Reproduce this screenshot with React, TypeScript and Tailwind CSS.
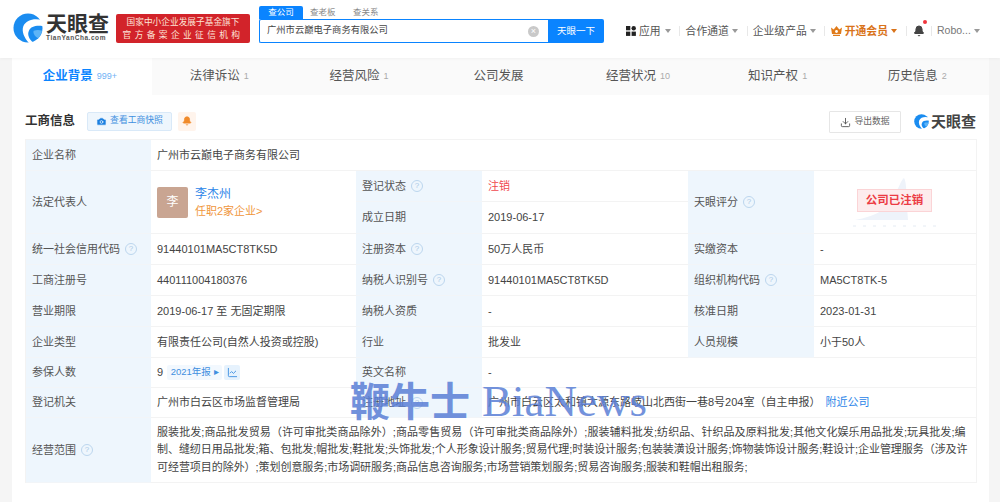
import React from 'react';
import { Download, Camera, Bell, ChartLine } from 'lucide-react';

const FONT = '"Liberation Sans", "Noto Sans CJK SC", sans-serif';

const Logo = ({ size }: { size: number }) => (
  <svg width={size} height={size} viewBox="0 0 32 32">
    <circle cx="16" cy="16" r="15.5" fill="#1a8cf0" />
    <path d="M32 8C24 5 14 7 11 14c-2 6 1 12 6 18h5c-5-4-7-9-5-13 2-5 8-6 15-5z" fill="#fff" />
    <path d="M22 19c3-1 6-1 9 0-1 3-2 6-4 8-3-1-6-5-5-8z" fill="#5db4f7" />
  </svg>
);

const Caret = ({ color = 'border-t-[#999]' }: { color?: string }) => (
  <span className={`inline-block w-0 h-0 border-x-[3px] border-x-transparent border-t-[4px] ${color}`} />
);

const Sep = () => <span className="w-px h-[10px] bg-[#e8e8e8]" />;

const Hint = () => (
  <span className="inline-flex items-center justify-center w-[12px] h-[12px] rounded-full border border-[#bcd6ee] text-[#a9c8e6] text-[8px] leading-none">?</span>
);

const Label = ({ children, hint, className = '' }: { children: React.ReactNode; hint?: boolean; className?: string }) => (
  <div className={`bg-[#eef6fd] border-b border-[#f2f5f8] pl-[6px] flex items-center gap-[5px] text-[#555] ${className}`}>
    {children}
    {hint && <Hint />}
  </div>
);

const Value = ({ children, className = '' }: { children: React.ReactNode; className?: string }) => (
  <div className={`border-b border-[#f3f3f3] pl-[6px] flex items-center text-[#444] ${className}`}>{children}</div>
);

const tabs = [
  { name: '企业背景', count: '999+', active: true },
  { name: '法律诉讼', count: '1' },
  { name: '经营风险', count: '1' },
  { name: '公司发展', count: '' },
  { name: '经营状况', count: '10' },
  { name: '知识产权', count: '1' },
  { name: '历史信息', count: '2' },
];

export default function App() {
  return (
    <div className="relative w-[1000px] h-[502px] overflow-hidden bg-[#f5f5f5]" style={{ fontFamily: FONT }}>
      {/* top bar */}
      <header className="h-[58px] bg-white flex items-start shadow-[0_1px_3px_rgba(0,0,0,0.04)] relative">
        <div className="ml-[13px] mt-[13px] flex">
          <Logo size={30} />
          <div className="ml-[3px] w-[63px]">
            <div className="text-[21px] leading-[21px] text-[#333] font-bold tracking-normal">天眼查</div>
            <div className="text-[6.5px] leading-[8px] text-[#555] font-bold tracking-[0.55px]">TianYanCha.com</div>
          </div>
        </div>
        <div className="ml-[7px] mt-[14px] w-[134px] h-[29px] bg-[#d2232a] rounded-[2px] text-[#fde4d8] flex flex-col items-center justify-center">
          <div className="text-[8.7px] leading-[13px]">国家中小企业发展子基金旗下</div>
          <div className="text-[8.7px] leading-[13px] tracking-[3.4px]">官方备案企业征信机构</div>
        </div>
        <div className="ml-[9px] mt-[6px] w-[345px]">
          <div className="flex h-[13px] text-[8.5px] leading-[13px] text-[#888]">
            <div className="w-[44px] bg-[#0a84ff] text-white text-center rounded-t-[2px]">查公司</div>
            <div className="ml-[7px] w-[28px]">查老板</div>
            <div className="ml-[15px] w-[28px]">查关系</div>
          </div>
          <div className="flex h-[24px] w-[345px]">
            <div className="flex-1 border border-[#0a84ff] border-r-0 rounded-l-[2px] flex items-center pl-[7px] pr-[9px] text-[9.3px] text-[#444]">
              <span className="flex-1">广州市云巅电子商务有限公司</span>
              <span className="w-[11px] h-[11px] rounded-full bg-[#c9c9c9] text-white text-[9px] leading-[11px] text-center">×</span>
            </div>
            <div className="w-[56px] bg-[#0a84ff] rounded-r-[2px] text-white text-[9.5px] flex items-center justify-center">天眼一下</div>
          </div>
        </div>
        <nav className="ml-[22px] mt-[24px] flex items-center h-[14px] text-[10.8px] text-[#555]">
          <svg width="10" height="10" viewBox="0 0 10 10" className="mr-[3px]">
            <rect x="0" y="0" width="4.3" height="4.3" fill="#222" />
            <circle cx="7.7" cy="2.2" r="2.2" fill="#222" />
            <rect x="0" y="5.6" width="4.3" height="4.3" fill="#222" />
            <rect x="5.6" y="5.6" width="4.3" height="4.3" fill="#222" />
          </svg>
          <span>应用</span>
          <span className="ml-[4px] mr-[8px] flex"><Caret /></span>
          <Sep />
          <span className="ml-[6px]">合作通道</span>
          <span className="ml-[3px] mr-[9px] flex"><Caret /></span>
          <Sep />
          <span className="ml-[5px]">企业级产品</span>
          <span className="ml-[3px] mr-[8px] flex"><Caret /></span>
          <Sep />
          <svg width="11" height="10" viewBox="0 0 11 10" className="ml-[6px] mr-[3px]">
            <path d="M0 1.5 2.7 3.5 5.5 0 8.3 3.5 11 1.5 10 8H1z M2 8.8h7V10H2z" fill="#e07b1a" />
            <circle cx="5.5" cy="5.5" r="1.4" fill="#fff" />
          </svg>
          <span className="font-bold text-[#d9731a]">开通会员</span>
          <span className="ml-[3px] mr-[9px] flex"><Caret color="border-t-[#d9731a]" /></span>
          <Sep />
          <span className="relative ml-[6px] mr-[6px] flex">
            <Bell size={12} className="text-[#444]" fill="#444" />
            <span className="absolute -top-[5px] left-[10px] w-[4px] h-[4px] rounded-full bg-[#f0343c]" />
          </span>
          <Sep />
          <span className="ml-[5px] text-[10.5px] text-[#777]">Robo...</span>
          <span className="ml-[3px] flex"><Caret /></span>
        </nav>
      </header>

      <main className="mx-[12px] w-[977px] h-[444px] bg-white">
        {/* tabs */}
        <div className="grid grid-cols-7 h-[37px] bg-[#fafafa]">
          {tabs.map(t => (
            <div key={t.name} className={`flex items-center justify-center gap-[4px] pr-[4px] ${t.active ? 'bg-white' : ''}`}>
              <span className={`text-[12.5px] ${t.active ? 'text-[#0a84ff] font-bold' : 'text-[#555]'}`}>{t.name}</span>
              {t.count && <span className={`text-[9px] ${t.active ? 'text-[#6fb2f5]' : 'text-[#aaa]'}`}>{t.count}</span>}
            </div>
          ))}
        </div>

        {/* section title */}
        <div className="flex items-center h-[44px] pt-[8px] pl-[13px] pr-[12px]">
          <span className="w-[50px] text-[12.5px] font-bold text-[#333]">工商信息</span>
          <button className="ml-[12px] h-[19px] w-[85px] rounded-[2px] bg-[#eef6fd] border border-[#d9e9f8] flex items-center justify-center gap-[3px] text-[8.8px] text-[#3f8fe0]">
            <Camera size={11} fill="#1a7fe0" stroke="#fff" strokeWidth={1.5} />
            查看工商快照
          </button>
          <span className="ml-[6px] w-[18px] h-[19px] rounded-[2px] bg-[#fff4ec] flex items-center justify-center">
            <Bell size={10} className="text-[#f08a2a]" fill="#f08a2a" />
          </span>
          <button className="ml-auto mt-[2px] h-[22px] w-[72px] border border-[#e6e6e6] rounded-[1px] flex items-center justify-center gap-[3px] text-[8.8px] text-[#666]">
            <Download size={11} className="text-[#555]" />
            导出数据
          </button>
          <span className="ml-[13px] flex items-center w-[63px]">
            <Logo size={15} />
            <span className="ml-[2px] text-[15px] leading-none font-bold text-[#444] whitespace-nowrap">天眼查</span>
          </span>
        </div>

        {/* info table */}
        <div className="ml-[13px] w-[952px] border border-[#f3f3f3] border-b-0 grid grid-cols-[125px_205px_126px_206px_126px_1fr] grid-rows-[31px_31px_32px_31px_31px_31px_31px_30px_30px_65px] text-[11px]">
          <Label>企业名称</Label>
          <Value className="col-span-5">广州市云巅电子商务有限公司</Value>

          <Label className="row-span-2">法定代表人</Label>
          <Value className="row-span-2">
            <span className="w-[31px] h-[31px] rounded-[2px] bg-[#c9a592] text-white text-[12px] flex items-center justify-center">李</span>
            <span className="ml-[7px] mt-[2px] flex flex-col">
              <span className="text-[#2a84e8] text-[12px] leading-[17px]">李杰州</span>
              <span className="text-[#f0963c] text-[11px] leading-[17px]">任职2家企业&gt;</span>
            </span>
          </Value>
          <Label hint>登记状态</Label>
          <Value><span className="text-[#f0484e]">注销</span></Value>
          <Label className="row-span-2" hint>天眼评分</Label>
          <Value className="row-span-2 relative pl-[43px]">
            <svg width="92" height="52" viewBox="0 0 92 52" className="absolute left-[37px] top-[5px]">
              <path d="M4 44C24 40 38 34 44 18 48 12 50 4 53 2 56 6 55 20 57 44z" fill="#eef3fa" />
              <path d="M2 50h88" stroke="#e4ebf3" strokeWidth="1" strokeDasharray="3 7" />
            </svg>
            <span className="relative -mt-[3px] w-[75px] h-[23px] bg-[#fdeced] border border-[#fbd4d6] text-[#ec3b44] font-bold text-[11.5px] flex items-center justify-center">公司已注销</span>
          </Value>
          <Label>成立日期</Label>
          <Value>2019-06-17</Value>

          <Label hint>统一社会信用代码</Label>
          <Value>91440101MA5CT8TK5D</Value>
          <Label hint>注册资本</Label>
          <Value>50万人民币</Value>
          <Label>实缴资本</Label>
          <Value>-</Value>

          <Label>工商注册号</Label>
          <Value>440111004180376</Value>
          <Label hint>纳税人识别号</Label>
          <Value>91440101MA5CT8TK5D</Value>
          <Label hint>组织机构代码</Label>
          <Value>MA5CT8TK-5</Value>

          <Label>营业期限</Label>
          <Value>2019-06-17 至 无固定期限</Value>
          <Label>纳税人资质</Label>
          <Value>-</Value>
          <Label>核准日期</Label>
          <Value>2023-01-31</Value>

          <Label>企业类型</Label>
          <Value>有限责任公司(自然人投资或控股)</Value>
          <Label>行业</Label>
          <Value>批发业</Value>
          <Label>人员规模</Label>
          <Value>小于50人</Value>

          <Label>参保人数</Label>
          <Value>
            9
            <span className="ml-[4px] h-[15px] w-[55px] bg-[#f2f8fe] rounded-[2px] text-[#3f8fe0] text-[9.5px] flex items-center justify-center">2021年报 ▸</span>
            <span className="ml-[2px] h-[15px] w-[16px] bg-[#e6f2fd] rounded-[2px] flex items-center justify-center">
              <ChartLine size={11} className="text-[#3f8fe0]" />
            </span>
          </Value>
          <Label>英文名称</Label>
          <Value className="col-span-3">-</Value>

          <Label>登记机关</Label>
          <Value>广州市白云区市场监督管理局</Value>
          <Label hint>注册地址</Label>
          <Value className="col-span-3">
            广州市白云区太和镇大源东路岐山北西街一巷8号204室（自主申报）
            <span className="ml-[5px] text-[#2a84e8]">附近公司</span>
          </Value>

          <Label hint>经营范围</Label>
          <div className="col-span-5 border-b border-[#f3f3f3] pl-[6px] flex items-center text-[#444] text-[11px] leading-[17.5px]">
            <p className="whitespace-nowrap">
              <span className="block tracking-[0.08px]">服装批发;商品批发贸易（许可审批类商品除外）;商品零售贸易（许可审批类商品除外）;服装辅料批发;纺织品、针织品及原料批发;其他文化娱乐用品批发;玩具批发;编</span>
              <span className="block tracking-[-0.05px]">制、缝纫日用品批发;箱、包批发;帽批发;鞋批发;头饰批发;个人形象设计服务;贸易代理;时装设计服务;包装装潢设计服务;饰物装饰设计服务;鞋设计;企业管理服务（涉及许</span>
              <span className="block tracking-[-0.05px]">可经营项目的除外）;策划创意服务;市场调研服务;商品信息咨询服务;市场营销策划服务;贸易咨询服务;服装和鞋帽出租服务;</span>
            </p>
          </div>
        </div>
      </main>

      {/* watermark over the table */}
      <div
        className="absolute left-[350px] top-[375px] text-[#5b7fd6] opacity-85 font-bold whitespace-nowrap flex items-baseline pointer-events-none"
        style={{ fontFamily: '"Liberation Serif", "Noto Sans CJK SC", serif' }}
      >
        <span className="text-[40px] leading-[52px]">鞭牛士</span>
        <span className="ml-[12px] text-[45px] leading-[52px] font-normal">BiaNews</span>
      </div>
    </div>
  );
}
